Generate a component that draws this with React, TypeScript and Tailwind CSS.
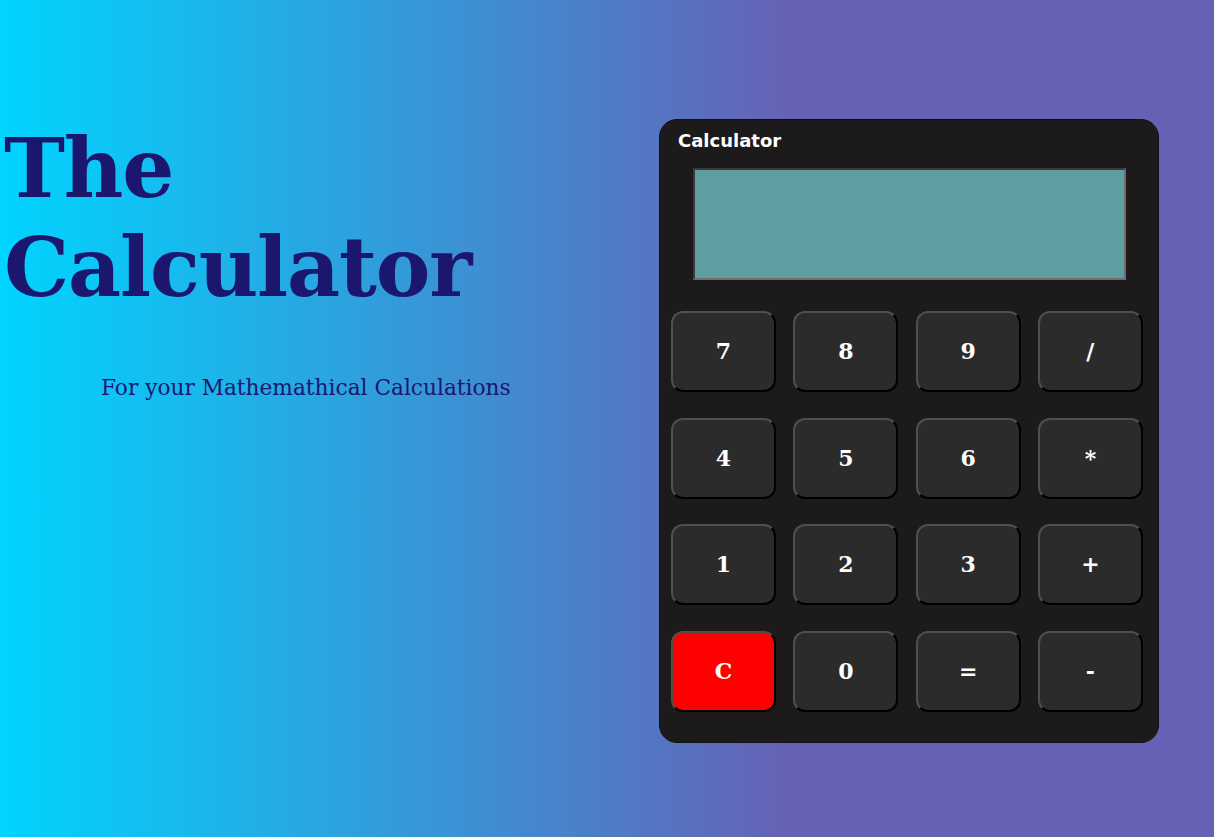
import React, { useState } from 'react';

const keys = ['7', '8', '9', '/', '4', '5', '6', '*', '1', '2', '3', '+', 'C', '0', '=', '-'];

const App: React.FC = () => {
  const [value, setValue] = useState<string>('');

  const press = (k: string) => {
    if (k === 'C') return setValue('');
    if (k === '=') {
      try {
        // eslint-disable-next-line no-new-func
        setValue(String(Function(`return (${value})`)()));
      } catch {
        setValue('Error');
      }
      return;
    }
    setValue(value + k);
  };

  return (
    <div className="min-h-[837px] w-full bg-[linear-gradient(90deg,#00d4ff_0%,#6562b5_65%,#6562b5_100%)] flex">
      {/* Heading */}
      <div className="w-[659px] shrink-0 pl-[4px] pt-[119px]">
        <h1 className="font-['DejaVu_Serif',Georgia,serif] font-bold text-[82px] leading-[99px] text-[#1b176e] tracking-[-1.2px]">
          The
          <br />
          Calculator
        </h1>
        <p className="mt-[55px] pl-[97px] font-['DejaVu_Serif',Georgia,serif] text-[21.7px] text-[#1b176e]">
          For your Mathemathical Calculations
        </p>
      </div>

      {/* Calculator */}
      <div className="pt-[119px]">
        <div className="w-[500px] h-[624px] bg-[#1c1a1b] rounded-[18px] border border-[#111]">
          <div className="pl-[18px] pt-[9px] font-['DejaVu_Sans',Verdana,sans-serif] font-bold text-[18px] text-white leading-[24px]">
            Calculator
          </div>
          <div className="pl-[33px] pt-[15px]">
            <input
              value={value}
              readOnly
              className="block w-[433px] h-[112px] bg-[#5f9ea0] border-2 border-solid border-t-[#3a3a3a] border-l-[#3a3a3a] border-b-[#6e6e6e] border-r-[#6e6e6e] px-3 text-right text-white text-[32px] font-['DejaVu_Sans',sans-serif] outline-none"
            />
          </div>
          <div className="grid grid-cols-[repeat(4,105px)] gap-x-[17.3px] gap-y-[25.5px] pl-[11px] pt-[31px]">
            {keys.map((k) => (
              <button
                key={k}
                onClick={() => press(k)}
                className={`h-[81px] rounded-[12px] border-2 border-solid border-t-[#4f4f4f] border-l-[#4f4f4f] border-b-black border-r-black font-['DejaVu_Serif',Georgia,serif] font-bold text-[22px] text-white ${
                  k === 'C' ? 'bg-[#ff0000]' : 'bg-[#2b2b2b]'
                }`}
              >
                {k}
              </button>
            ))}
          </div>
        </div>
      </div>
    </div>
  );
};

export default App;
